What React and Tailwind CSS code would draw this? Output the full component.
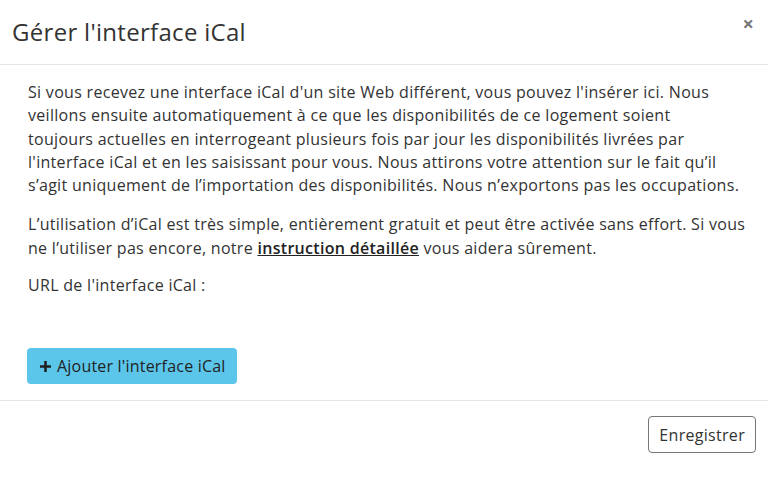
export default function App() {
  const font = { fontFamily: '"Open Sans", "Liberation Sans", sans-serif' };
  return (
    <div className="w-[768px] h-[500px] bg-white text-[#333]" style={font}>
      <div className="flex items-start justify-between h-[65px] border-b border-[#e5e5e5] pl-[12px] pr-[14px]">
        <h4 className="text-[24px] leading-[30px] mt-[17px] tracking-[0.3px] text-[#333]">Gérer l'interface iCal</h4>
        <button className="mt-[14px] text-[20px] font-bold text-[#777] leading-none">×</button>
      </div>
      <div className="pl-[28px] pr-[12px] pt-[16px] pb-[16px] text-[16px] leading-[23.3px] tracking-[0.3px] whitespace-nowrap">
        <p className="mb-[16px]">
          Si vous recevez une interface iCal d'un site Web différent, vous pouvez l'insérer ici. Nous<br />
          veillons ensuite automatiquement à ce que les disponibilités de ce logement soient<br />
          toujours actuelles en interrogeant plusieurs fois par jour les disponibilités livrées par<br />
          l'interface iCal et en les saisissant pour vous. Nous attirons votre attention sur le fait qu’il<br />
          s’agit uniquement de l’importation des disponibilités. Nous n’exportons pas les occupations.
        </p>
        <p className="mb-[14px]">
          L’utilisation d’iCal est très simple, entièrement gratuit et peut être activée sans effort. Si vous<br />
          ne l’utiliser pas encore, notre <a className="font-semibold underline text-[#222]">instruction détaillée</a> vous aidera sûrement.
        </p>
        <p>URL de l'interface iCal :</p>
        <div className="h-[51px]" />
        <button className="-ml-px flex items-center gap-[5px] h-[36px] pl-[12px] pr-[11px] rounded-[4px] bg-[#5bc6ea] text-[#222] text-[16px] tracking-[0.2px]">
          <svg width="13" height="13" viewBox="0 0 13 13" className="shrink-0">
            <path d="M6.5 1v11M1 6.5h11" stroke="#222" strokeWidth="2.6" />
          </svg>
          Ajouter l'interface iCal
        </button>
      </div>
      <div className="flex justify-end border-t border-[#e5e5e5] pt-[15px] pr-[12px]">
        <button className="h-[37px] px-[10px] border border-[#777] rounded-[4px] text-[16px] tracking-[0.3px] text-[#333]">Enregistrer</button>
      </div>
    </div>
  );
}
